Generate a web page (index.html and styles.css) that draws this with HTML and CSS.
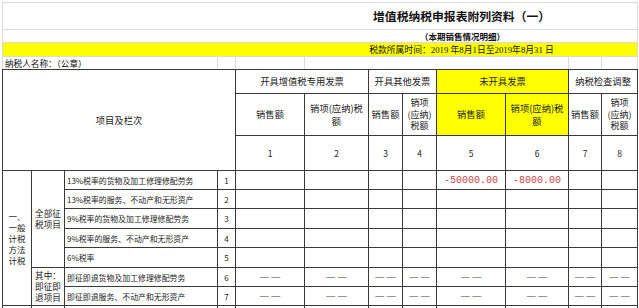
FILE: index.html
```html
<!DOCTYPE html>
<html lang="zh-CN">
<head>
<meta charset="utf-8">
<title>增值税纳税申报表附列资料（一）</title>
<link rel="stylesheet" href="styles.css">
</head>
<body>
<div class="sheet">
<table class="grid">
<colgroup>
<col class="ca"><col class="cb"><col class="cc"><col class="cd"><col class="ce"><col class="cf"><col class="cg"><col class="ch"><col class="ci"><col class="cj"><col class="ck"><col class="cl">
</colgroup>
<tr class="r-title"><td colspan="12" class="title">增值税纳税申报表附列资料（一）</td></tr>
<tr class="r-sub"><td colspan="12" class="subtitle">（本期销售情况明细）</td></tr>
<tr class="r-date"><td colspan="12" class="date">税款所属时间：2019 年8月1日至2019年8月31 日</td></tr>
<tr class="r-payer"><td colspan="3" class="payer">纳税人名称：（公章）</td><td></td><td></td><td colspan="5"></td><td></td><td></td></tr>
<tr class="h1">
<td colspan="4" rowspan="3" class="item">项目及栏次</td>
<td colspan="2">开具增值税专用发票</td>
<td colspan="2">开具其他发票</td>
<td colspan="2" class="hl">未开具发票</td>
<td colspan="2">纳税检查调整</td>
</tr>
<tr class="h2">
<td>销售额</td>
<td class="two">销项(应纳)税<br>额</td>
<td>销售额</td>
<td class="three">销项<br>(应纳)<br>税额</td>
<td class="hl">销售额</td>
<td class="hl two">销项(应纳)税<br>额</td>
<td>销售额</td>
<td class="three">销项<br>(应纳)<br>税额</td>
</tr>
<tr class="h3"><td>1</td><td>2</td><td>3</td><td>4</td><td>5</td><td>6</td><td>7</td><td>8</td></tr>
<tr class="d d1">
<td rowspan="7" class="sec">一、<br>一般<br>计税<br>方法<br>计税</td>
<td rowspan="5" class="grp">全部征<br>税项目</td>
<td class="name">13%税率的货物及加工修理修配劳务</td><td class="no">1</td>
<td></td><td></td><td></td><td></td><td class="neg">-50000.00</td><td class="neg">-8000.00</td><td></td><td></td>
</tr>
<tr class="d d2"><td class="name">13%税率的服务、不动产和无形资产</td><td class="no">2</td><td></td><td></td><td></td><td></td><td></td><td></td><td></td><td></td></tr>
<tr class="d d3"><td class="name">9%税率的货物及加工修理修配劳务</td><td class="no">3</td><td></td><td></td><td></td><td></td><td></td><td></td><td></td><td></td></tr>
<tr class="d d4"><td class="name">9%税率的服务、不动产和无形资产</td><td class="no">4</td><td></td><td></td><td></td><td></td><td></td><td></td><td></td><td></td></tr>
<tr class="d d5"><td class="name">6%税率</td><td class="no">5</td><td></td><td></td><td></td><td></td><td></td><td></td><td></td><td></td></tr>
<tr class="d d6">
<td rowspan="2" class="grp">其中：<br>即征即<br>退项目</td>
<td class="name">即征即退货物及加工修理修配劳务</td><td class="no">6</td>
<td class="dash">— —</td><td class="dash">— —</td><td class="dash">— —</td><td class="dash">— —</td><td class="dash">— —</td><td class="dash">— —</td><td class="dash">— —</td><td class="dash">— —</td>
</tr>
<tr class="d d7">
<td class="name">即征即退服务、不动产和无形资产</td><td class="no">7</td>
<td class="dash">— —</td><td class="dash">— —</td><td class="dash">— —</td><td class="dash">— —</td><td class="dash">— —</td><td class="dash">— —</td><td class="dash">— —</td><td class="dash">— —</td>
</tr>
<tr class="d tail"><td></td><td></td><td></td><td></td><td></td><td></td><td></td><td></td><td></td><td></td><td></td><td></td></tr>
</table>
</div>
</body>
</html>
```
FILE: styles.css
```css
html, body {
  margin: 0;
  padding: 0;
  background: #ffffff;
}
body {
  width: 639px;
  height: 308px;
  overflow: hidden;
  font-family: "Noto Sans CJK SC", "Noto Sans", sans-serif;
  color: #222222;
}
.sheet {
  padding: 2px 0 0 2px;
}
.grid {
  border-collapse: collapse;
  table-layout: fixed;
  width: 635px;
}
.ca { width: 29px; }
.cb { width: 33px; }
.cc { width: 153px; }
.cd { width: 18px; }
.ce { width: 69px; }
.cf { width: 64px; }
.cg { width: 34px; }
.ch { width: 34px; }
.ci { width: 69px; }
.cj { width: 63px; }
.ck { width: 33px; }
.cl { width: 36px; }

.grid td {
  padding: 0;
  border: 1px solid #3a3a3a;
  font-size: 9.3px;
  line-height: 11px;
  text-align: center;
  vertical-align: middle;
  white-space: nowrap;
  overflow: hidden;
}

/* top sheet area: faint gridlines */
.grid .r-title td, .grid .r-sub td, .grid .r-date td, .grid .r-payer td {
  border-color: #dadada;
}
.grid .r-payer td {
  border-bottom-color: #3a3a3a;
}
.r-title { height: 27px; }
.r-sub { height: 13px; }
.r-date { height: 14px; }
.r-payer { height: 13px; }

.grid td.title {
  font-size: 11.8px;
  font-weight: 700;
  line-height: 16px;
  padding-left: 283px;
  color: #111111;
}
.grid td.subtitle {
  font-size: 8.5px;
  font-weight: 700;
  line-height: 10px;
  padding-left: 285px;
  color: #111111;
}
.grid td.date {
  background: #ffff00;
  font-family: "Liberation Serif", "Noto Sans CJK SC", serif;
  font-size: 8.8px;
  line-height: 10px;
  padding-left: 283px;
  color: #111111;
}
.grid td.payer {
  text-align: left;
  font-size: 8.6px;
  line-height: 10px;
  padding-left: 2px;
  color: #111111;
}

.h1 { height: 24px; }
.h2 { height: 42px; }
.h3 { height: 35px; }
.grid td.hl { background: #ffff00; }
.grid td.two { line-height: 12.5px; }
.grid td.three { font-size: 9px; line-height: 11.5px; }
.grid .h3 td { font-size: 8.5px; }

.d { height: 19px; }
.d3, .d5 { height: 20px; }
.tail { height: 12px; }

.grid td.sec {
  font-size: 8.5px;
  line-height: 11px;
}
.grid td.grp {
  font-size: 8.6px;
  line-height: 11px;
}
.grid td.name {
  text-align: left;
  font-size: 7.9px;
  padding-left: 2px;
  color: #1a1a1a;
}
.grid td.no {
  font-size: 8px;
}
.grid td.neg {
  font-family: "Liberation Mono", monospace;
  font-size: 10px;
  color: #c94545;
}
.grid td.dash {
  font-family: "Liberation Sans", sans-serif;
  font-size: 9px;
  color: #444444;
}
```
